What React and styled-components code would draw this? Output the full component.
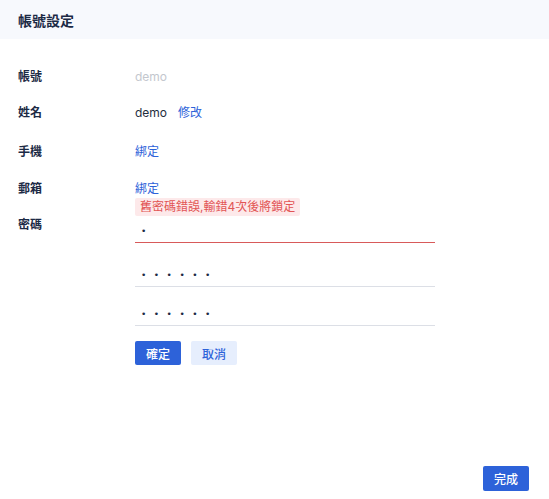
import React from "react";
import styled, { createGlobalStyle } from "styled-components";

const GlobalStyle = createGlobalStyle`
  html, body {
    margin: 0;
    padding: 0;
    background: #ffffff;
  }
  body {
    font-family: Inter, "Noto Sans CJK TC", "Noto Sans", sans-serif;
    color: #1f2d3d;
  }
`;

const Page = styled.div`
  height: 499px;
  display: flex;
  flex-direction: column;
`;

const Header = styled.div`
  height: 39px;
  display: flex;
  align-items: center;
  padding: 0 18px;
  background: #f7f9fd;
  font-size: 14px;
  font-weight: 700;
  color: #1c2a45;
`;

const Body = styled.div`
  flex: 1;
  padding: 28px 18px 0;
`;

const Row = styled.div`
  display: flex;
  align-items: ${(p) => (p.$top ? "flex-start" : "center")};
  min-height: 20px;
  margin-bottom: ${(p) => p.$gap || 17}px;
`;

const Label = styled.div`
  width: 117px;
  flex-shrink: 0;
  font-size: 12px;
  font-weight: 700;
  line-height: 20px;
  color: #1c2a45;
`;

const Value = styled.span`
  font-size: 12px;
  line-height: 20px;
  color: ${(p) => (p.$muted ? "#c3c7ce" : "#1f2d3d")};
`;

const Link = styled.a`
  font-size: 12px;
  line-height: 20px;
  color: #2d62d9;
  text-decoration: none;
  cursor: pointer;
  margin-left: ${(p) => p.$gap || 0}px;
`;

const PasswordBox = styled.div`
  position: relative;
  width: 300px;
  margin-top: -3px;
`;

const ErrorTag = styled.div`
  position: absolute;
  left: 0;
  top: -14px;
  padding: 0 5px;
  height: 18px;
  line-height: 18px;
  font-size: 12px;
  color: #e25454;
  background: #fde9ea;
  border-radius: 2px;
  z-index: 1;
`;

const Field = styled.input`
  display: block;
  box-sizing: border-box;
  width: 300px;
  height: 31px;
  margin: 0 0 ${(p) => p.$gap || 0}px;
  padding: 8px 6px 0;
  border: none;
  border-bottom: 1px solid ${(p) => (p.$error ? "#d85a5a" : "#dcdfe6")};
  outline: none;
  background: transparent;
  font-family: "DejaVu Sans", sans-serif;
  font-size: 9px;
  letter-spacing: 7.5px;
  color: #1c2a45;
`;

const Actions = styled.div`
  display: flex;
  gap: 10px;
  margin-top: 15px;
`;

const Button = styled.button`
  height: 24px;
  padding: 0 11px;
  border: none;
  border-radius: 2px;
  font-family: inherit;
  font-size: 12px;
  font-weight: 500;
  cursor: pointer;
  background: ${(p) => (p.$primary ? "#2d62d9" : "#e6eefd")};
  color: ${(p) => (p.$primary ? "#ffffff" : "#2d62d9")};
`;

const Footer = styled.div`
  display: flex;
  justify-content: flex-end;
  padding: 0 20px 8px;
`;

const DoneButton = styled(Button)`
  height: 25px;
`;

export default function App() {
  return (
    <Page>
      <GlobalStyle />
      <Header>帳號設定</Header>
      <Body>
        <Row $gap={16}>
          <Label>帳號</Label>
          <Value $muted>demo</Value>
        </Row>
        <Row $gap={19}>
          <Label>姓名</Label>
          <Value>demo</Value>
          <Link $gap={11}>修改</Link>
        </Row>
        <Row $gap={17}>
          <Label>手機</Label>
          <Link>綁定</Link>
        </Row>
        <Row $gap={16}>
          <Label>郵箱</Label>
          <Link>綁定</Link>
        </Row>
        <Row $top>
          <Label>密碼</Label>
          <div>
            <PasswordBox>
              <ErrorTag>舊密碼錯誤,輸錯4次後將鎖定</ErrorTag>
              <Field type="password" defaultValue="1" $error $gap={13} />
              <Field type="password" defaultValue="123456" $gap={8} />
              <Field type="password" defaultValue="123456" />
            </PasswordBox>
            <Actions>
              <Button $primary>確定</Button>
              <Button>取消</Button>
            </Actions>
          </div>
        </Row>
      </Body>
      <Footer>
        <DoneButton $primary>完成</DoneButton>
      </Footer>
    </Page>
  );
}
